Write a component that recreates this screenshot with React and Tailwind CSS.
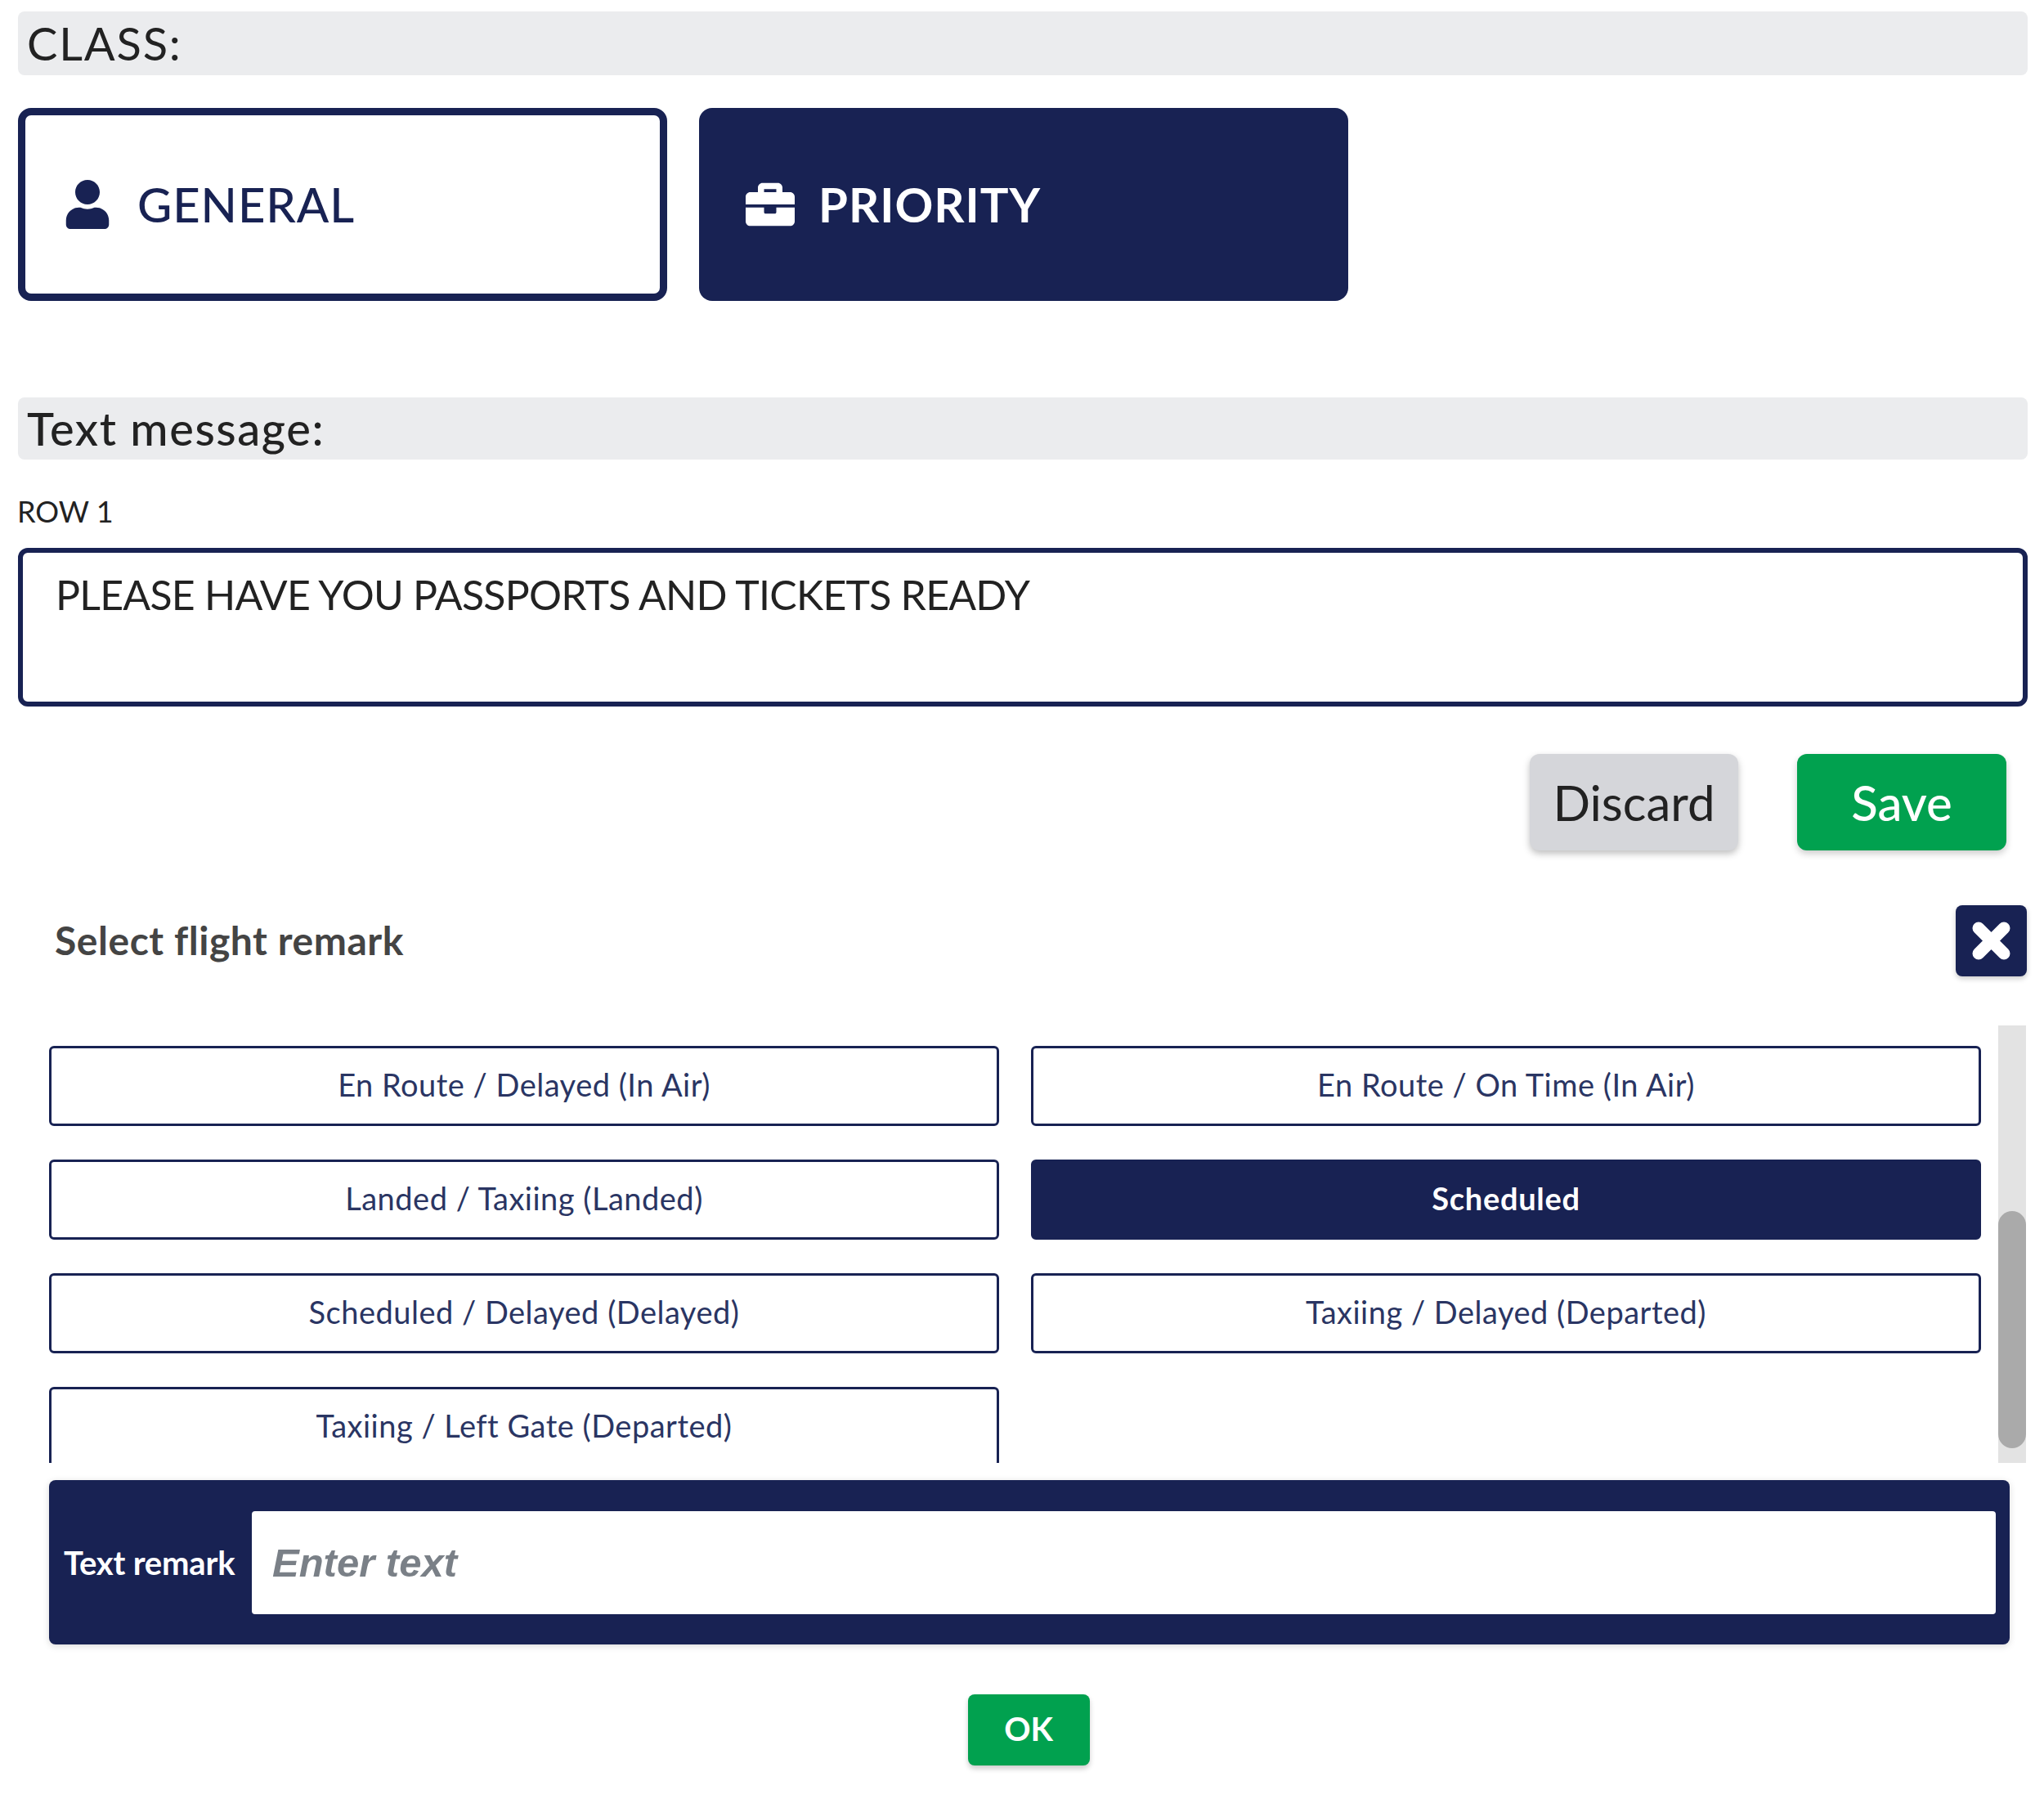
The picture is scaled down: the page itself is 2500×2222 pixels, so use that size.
import React from 'react';
import { FaUser, FaBriefcase } from 'react-icons/fa';

const remarks = [
  { label: 'En Route / Delayed (In Air)' },
  { label: 'En Route / On Time (In Air)' },
  { label: 'Landed / Taxiing (Landed)' },
  { label: 'Scheduled', active: true },
  { label: 'Scheduled / Delayed (Delayed)' },
  { label: 'Taxiing / Delayed (Departed)' },
  { label: 'Taxiing / Left Gate (Departed)' },
];

function RemarkButton({ label, active }) {
  if (active) {
    return (
      <button className="h-[98px] pb-[3px] rounded-md bg-[#182253] border-[3px] border-[#182253] text-white font-bold text-[38px] tracking-[0.7px]">
        {label}
      </button>
    );
  }
  return (
    <button className="h-[98px] pb-[3px] rounded-md bg-white border-[3px] border-[#182253] text-[#2a3563] text-[38px] tracking-[0.5px]">
      {label}
    </button>
  );
}

export default function App() {
  return (
    <div className="w-[2500px] h-[2222px] bg-white pt-[14px] pl-[22px] pr-[20px] font-['Lato',sans-serif] overflow-hidden">
      <div className="h-[78px] bg-[#ebecee] rounded-lg pl-[11px] flex items-center text-[#222] text-[56px] tracking-[1.8px]">
        CLASS:
      </div>

      <div className="flex gap-[39px] mt-[40px]">
        <button className="w-[794px] h-[236px] rounded-2xl bg-white border-[9px] border-[#182253] text-[#182253] flex items-center pl-[46px] gap-[31px] text-[58px] font-medium tracking-[0.9px]">
          <FaUser className="w-[60px] h-[60px]" />
          <span className="pb-[2px]">GENERAL</span>
        </button>
        <button className="w-[794px] h-[236px] rounded-2xl bg-[#182253] text-white flex items-center pl-[57px] gap-[29px] text-[58px] font-bold tracking-[1px]">
          <FaBriefcase className="w-[60px] h-[60px]" />
          <span className="pb-[2px]">PRIORITY</span>
        </button>
      </div>

      <div className="mt-[118px] h-[76px] bg-[#ebecee] rounded-lg pl-[11px] flex items-center text-[#222] text-[56px] font-medium tracking-[1.6px]">
        Text message:
      </div>

      <div className="mt-[44px] text-[36px] leading-[38px] text-[#222] -ml-[1px]">ROW 1</div>

      <div className="mt-[26px] h-[194px] rounded-xl border-[6px] border-[#182253] bg-white pl-[40px] pt-[21px] text-[50px] leading-[60px] text-[#222] tracking-[-0.75px]">
        PLEASE HAVE YOU PASSPORTS AND TICKETS READY
      </div>

      <div className="flex justify-end gap-[72px] mt-[58px] pr-[26px]">
        <button className="w-[255px] h-[118px] rounded-xl bg-[#d5d6da] text-[#222] text-[60px] shadow-[0_4px_8px_rgba(0,0,0,0.25)]">
          Discard
        </button>
        <button className="w-[256px] h-[118px] rounded-xl bg-[#01a14f] text-white text-[60px] font-medium shadow-[0_4px_8px_rgba(0,0,0,0.2)]">
          Save
        </button>
      </div>

      <div className="flex items-center justify-between mt-[67px] pl-[45px] pr-[1px]">
        <span className="text-[48px] font-bold text-[#444] tracking-[0.55px] pb-[2px]">Select flight remark</span>
        <button className="w-[87px] h-[87px] rounded-lg bg-[#182253] text-white flex items-center justify-center shadow-[0_3px_6px_rgba(0,0,0,0.2)]">
          <svg viewBox="0 0 47 47" className="w-[47px] h-[47px]" fill="none" stroke="currentColor" strokeWidth="15" strokeLinecap="round">
            <path d="M8 8 L39 39 M39 8 L8 39" />
          </svg>
        </button>
      </div>

      <div className="flex mt-[60px] h-[535px]">
        <div className="flex-1 h-full overflow-hidden pl-[38px] pr-[21px] pt-[25px]">
          <div className="grid grid-cols-2 gap-x-[39px] gap-y-[41px]">
            {remarks.map(r => (
              <RemarkButton key={r.label} label={r.label} active={r.active} />
            ))}
          </div>
        </div>
        <div className="w-[34px] h-full bg-[#e3e3e3] pt-[227px] mr-[2px]">
          <div className="h-[290px] rounded-full bg-[#aaaaaa]" />
        </div>
      </div>

      <div className="ml-[38px] mr-[22px] mt-[21px] h-[201px] rounded-lg bg-[#182253] flex items-center pl-[18px] pr-[17px] shadow-[0_2px_8px_rgba(0,0,0,0.15)]">
        <span className="w-[230px] shrink-0 text-white font-bold text-[40px] tracking-[-0.2px]">Text remark</span>
        <input
          className="flex-1 h-[126px] rounded bg-white pl-[25px] text-[49px] italic font-bold font-['Liberation_Sans',sans-serif] placeholder:text-[#7a8087] outline-none"
          placeholder="Enter text"
          readOnly
        />
      </div>

      <div className="flex justify-center mt-[61px] pl-[14px]">
        <button className="w-[149px] h-[87px] pb-[3px] rounded-lg bg-[#01a14f] text-white font-bold text-[40px] shadow-[0_4px_6px_rgba(0,0,0,0.2)]">
          OK
        </button>
      </div>
    </div>
  );
}
